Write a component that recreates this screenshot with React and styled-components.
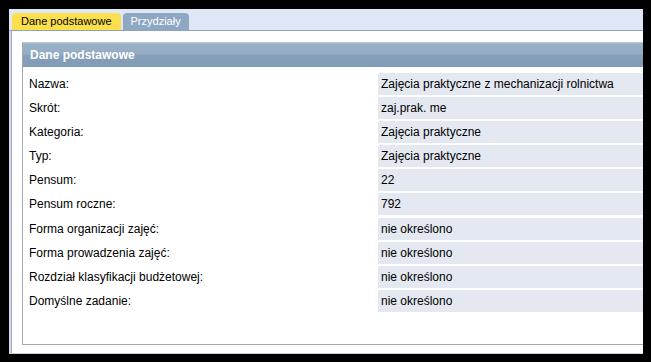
import styled, { createGlobalStyle } from 'styled-components'

const GlobalStyle = createGlobalStyle`
    html, body {
        margin: 0;
        padding: 0;
        background: #000;
    }
    body {
        font-family: Tahoma, "Liberation Sans", Arial, sans-serif;
        font-size: 12px;
        color: #000;
    }
`

const Frame = styled.div`
    padding: 9px 8px 8px 9px;
    width: 651px;
    height: 362px;
    box-sizing: border-box;
`

const Window = styled.div`
    width: 634px;
    height: 345px;
    overflow: hidden;
    background: #dfe6f5;
    display: flex;
    flex-direction: column;
`

const TabBar = styled.div`
    height: 21px;
    display: flex;
    align-items: flex-end;
    gap: 2px;
    padding-left: 3px;
    border-bottom: 1px solid #8fa2bd;
    flex-shrink: 0;
`

const Tab = styled.div`
    height: 17px;
    line-height: 17px;
    padding: 0 ${p => (p.$active ? '9px' : '8px')};
    border-radius: 4px 4px 0 0;
    font-size: 11px;
    background: ${p => (p.$active ? '#fbe04c' : '#8ea7c3')};
    color: ${p => (p.$active ? '#000' : '#fff')};
    box-sizing: border-box;
`

const Panel = styled.div`
    flex: 1;
    width: 660px;
    background: #fff;
    border-left: 2px solid #ccd8ec;
    border-bottom: 1px solid #c8d0dc;
    display: flex;
    flex-direction: column;
    box-sizing: border-box;
`

const PanelInner = styled.div`
    flex: 1;
    border-left: 1px solid #a6acb5;
    padding: 11px 0 8px 10px;
    display: flex;
    flex-direction: column;
`

const Section = styled.div`
    flex: 1;
    border-left: 1px solid #a4a9b1;
    border-bottom: 1px solid #a4a9b1;
    display: flex;
    flex-direction: column;
`

const SectionHeader = styled.div`
    height: 25px;
    line-height: 24px;
    padding-left: 7px;
    color: #fff;
    font-weight: bold;
    font-size: 12px;
    background: linear-gradient(#a9bdd1 0px, #9bb2c8 1px, #93abc3 11px, #869fba 13px, #809bb7 25px);
    border-top: 1px solid #bccbd9;
    box-sizing: border-box;
`

const Rows = styled.div`
    display: grid;
    grid-template-columns: 349px 1fr;
    grid-auto-rows: 22px;
    row-gap: 2.1px;
    padding: 6px 0 0 6px;
`

const Label = styled.div`
    line-height: 22px;
    white-space: nowrap;
`

const Value = styled.div`
    line-height: 22px;
    padding-left: 3px;
    background: #e4e9f1;
    white-space: nowrap;
`

const fields = [
    ['Nazwa:', 'Zajęcia praktyczne z mechanizacji rolnictwa'],
    ['Skrót:', 'zaj.prak. me'],
    ['Kategoria:', 'Zajęcia praktyczne'],
    ['Typ:', 'Zajęcia praktyczne'],
    ['Pensum:', '22'],
    ['Pensum roczne:', '792'],
    ['Forma organizacji zajęć:', 'nie określono'],
    ['Forma prowadzenia zajęć:', 'nie określono'],
    ['Rozdział klasyfikacji budżetowej:', 'nie określono'],
    ['Domyślne zadanie:', 'nie określono'],
]

export default function App() {
    return (<>
        <GlobalStyle />
        <Frame>
            <Window>
                <TabBar>
                    <Tab $active>Dane podstawowe</Tab>
                    <Tab>Przydziały</Tab>
                </TabBar>
                <Panel>
                    <PanelInner>
                        <Section>
                            <SectionHeader>Dane podstawowe</SectionHeader>
                            <Rows>
                                {fields.map(([label, value]) => [
                                    <Label key={label}>{label}</Label>,
                                    <Value key={label + 'v'}>{value}</Value>,
                                ])}
                            </Rows>
                        </Section>
                    </PanelInner>
                </Panel>
            </Window>
        </Frame>
    </>)
}
